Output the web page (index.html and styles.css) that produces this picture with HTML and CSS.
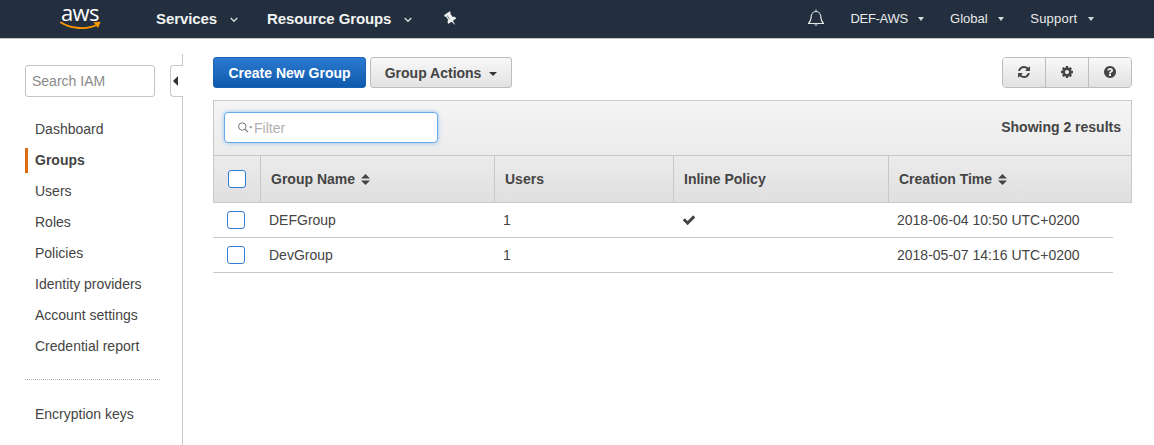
FILE: index.html
```html
<!DOCTYPE html>
<html lang="en">
<head>
    <meta charset="UTF-8">
    <meta name="viewport" content="width=device-width, initial-scale=1.0">
    <title>IAM Groups</title>
    <link rel="stylesheet" href="styles.css">
</head>
<body>
    <header class="topbar">
        <div class="logo">
            <span class="logo-text">aws</span>
            <svg class="logo-smile" viewBox="0 0 42 10" width="42" height="10">
                <path d="M1 1.5C11 8 27 9 38 3.5" fill="none" stroke="#f90" stroke-width="1.8" stroke-linecap="round"/>
                <path d="M33.5 1.2L40.6.8 38 7z" fill="#f90"/>
            </svg>
        </div>
        <a class="nav-main nav-services">Services <svg class="chev" viewBox="0 0 8 6" width="8" height="6"><path d="M.7 1L4 4.300 7.300 1" fill="none" stroke="#d5dbdb" stroke-width="1.400"/></svg></a>
        <a class="nav-main nav-groups">Resource Groups <svg class="chev" viewBox="0 0 8 6" width="8" height="6"><path d="M.7 1L4 4.300 7.300 1" fill="none" stroke="#d5dbdb" stroke-width="1.400"/></svg></a>
        <svg class="pin" viewBox="0 0 1792 1792" width="15" height="15"><path fill="#eef0f0" d="M800 864v-448q0-14-9-23t-23-9-23 9-9 23v448q0 14 9 23t23 9 23-9 9-23zm672 352q0 26-19 45t-45 19h-429l-51 483q-2 12-10.500 20.500t-20.500 8.500h-1q-27 0-32-27l-76-485h-404q-26 0-45-19t-19-45q0-123 78.500-221.500t177.500-98.500v-512q-52 0-90-38t-38-90 38-90 90-38h640q52 0 90 38t38 90-38 90-90 38v512q99 0 177.500 98.500t78.500 221.500z"/></svg>
        <svg class="bell" viewBox="0 0 18 18" width="18" height="18"><path d="M1.500 14.500c1.600-1.600 2.600-2.600 2.600-6 0-3.300 2-6 4.900-6s4.900 2.700 4.900 6c0 3.400 1 4.400 2.600 6z" fill="none" stroke="#e6e9e9" stroke-width="1.200" stroke-linejoin="round"/><path d="M7.200 15.500c.3 1.400 3.300 1.400 3.600 0z" fill="#e6e9e9"/><path d="M9 .5v2" stroke="#e6e9e9" stroke-width="1"/></svg>
        <a class="nav-sub nav-account">DEF-AWS <i class="caret caret-light"></i></a>
        <a class="nav-sub nav-region">Global <i class="caret caret-light"></i></a>
        <a class="nav-sub nav-support">Support <i class="caret caret-light"></i></a>
    </header>

    <div class="page">
        <aside class="sidebar">
            <input class="search" type="text" placeholder="Search IAM">
            <button class="collapse"><i class="collapse-arrow"></i></button>
            <ul class="side-list">
                <li>Dashboard</li>
                <li class="active">Groups</li>
                <li>Users</li>
                <li>Roles</li>
                <li>Policies</li>
                <li>Identity providers</li>
                <li>Account settings</li>
                <li>Credential report</li>
            </ul>
            <div class="side-divider"></div>
            <ul class="side-list side-list-extra">
                <li>Encryption keys</li>
            </ul>
        </aside>

        <main class="content">
            <div class="actions">
                <button class="btn btn-primary">Create New Group</button>
                <button class="btn btn-default">Group Actions <i class="caret caret-dark"></i></button>
                <div class="btn-group">
                    <button class="btn-icon"><svg viewBox="0 0 1792 1792" width="14" height="14"><path d="M1639 1056q0 5-1 7-64 268-268 434.500t-478 166.500q-146 0-282.500-55t-243.500-157l-129 129q-19 19-45 19t-45-19-19-45v-448q0-26 19-45t45-19h448q26 0 45 19t19 45-19 45l-137 137q71 66 161 102t187 36q134 0 250-65t186-179q11-17 53-117 8-23 30-23h192q13 0 22.500 9.500t9.500 22.500zm25-800v448q0 26-19 45t-45 19h-448q-26 0-45-19t-19-45 19-45l138-138q-148-137-349-137-134 0-250 65t-186 179q-11 17-53 117-8 23-30 23h-199q-13 0-22.500-9.500t-9.500-22.500v-7q65-268 270-434.500t480-166.500q146 0 284 55.500t245 156.500l130-129q19-19 45-19t45 19 19 45z"/></svg></button>
                    <button class="btn-icon"><svg viewBox="0 0 1792 1792" width="14" height="14"><path d="M1152 896q0-106-75-181t-181-75-181 75-75 181 75 181 181 75 181-75 75-181zm512-109v222q0 12-8 23t-20 13l-185 28q-19 54-39 91 35 50 107 138 10 12 10 25t-9 23q-27 37-99 108t-94 71q-12 0-26-9l-138-108q-44 23-91 38-16 136-29 186-7 28-36 28h-222q-14 0-24.500-8.500t-11.500-21.500l-28-184q-49-16-90-37l-141 107q-10 9-25 9-14 0-25-11-126-114-165-168-7-10-7-23 0-12 8-23 15-21 51-66.500t54-70.500q-27-50-41-99l-183-27q-13-2-21-12.500t-8-23.500v-222q0-12 8-23t19-13l186-28q14-46 39-92-40-57-107-138-10-12-10-24 0-10 9-23 26-36 98.500-107.500t94.500-71.500q13 0 26 10l138 107q44-23 91-38 16-136 29-186 7-28 36-28h222q14 0 24.500 8.500t11.500 21.500l28 184q49 16 90 37l142-107q9-9 24-9 13 0 25 10 129 119 165 170 7 8 7 22 0 12-8 23-15 21-51 66.500t-54 70.500q26 50 41 98l183 28q13 2 21 12.500t8 23.500z"/></svg></button>
                    <button class="btn-icon"><svg viewBox="0 0 1792 1792" width="14" height="14"><path d="M1024 1376v-192q0-14-9-23t-23-9h-192q-14 0-23 9t-9 23v192q0 14 9 23t23 9h192q14 0 23-9t9-23zm256-672q0-88-55.500-163t-138.500-116-170-41q-243 0-371 213-15 24 8 42l132 100q7 6 19 6 16 0 25-12 53-68 86-92 34-24 86-24 48 0 85.500 26t37.500 59q0 38-20 61t-68 45q-63 28-115.500 86.500t-52.500 125.500v36q0 14 9 23t23 9h192q14 0 23-9t9-23q0-19 21.500-49.500t54.500-49.500q32-18 49-28.500t46-35 44.500-48 28-60.500 12.500-81zm384 192q0 209-103 385.500t-279.500 279.500-385.500 103-385.500-103-279.500-279.500-103-385.500 103-385.500 279.500-279.500 385.500-103 385.500 103 279.500 279.500 103 385.500z"/></svg></button>
                </div>
            </div>

            <div class="toolbar">
                <div class="filter">
                    <svg class="filter-icon" viewBox="0 0 16 12" width="16" height="12"><circle cx="4.300" cy="4.500" r="3.700" fill="none" stroke="#777" stroke-width="1"/><path d="M7 7.200l3 3" stroke="#777" stroke-width="1.200"/><path d="M11 4.500h3.600l-1.800 1.900z" fill="#888"/></svg>
                    <span class="filter-text">Filter</span>
                </div>
                <span class="results">Showing 2 results</span>
            </div>

            <div class="grid-row grid-head">
                <div class="head-cell"><i class="check check-head"></i></div>
                <div class="head-cell">Group Name <svg class="sort" viewBox="0 0 9 11" width="9" height="11"><path d="M4.500 0L9 4.500H0zM4.500 11L0 6.500h9z" fill="#444"/></svg></div>
                <div class="head-cell">Users</div>
                <div class="head-cell">Inline Policy</div>
                <div class="head-cell">Creation Time <svg class="sort" viewBox="0 0 9 11" width="9" height="11"><path d="M4.500 0L9 4.500H0zM4.500 11L0 6.500h9z" fill="#444"/></svg></div>
            </div>

            <div class="grid-row body-row">
                <div class="body-cell"><i class="check"></i></div>
                <div class="body-cell">DEFGroup</div>
                <div class="body-cell">1</div>
                <div class="body-cell"><svg viewBox="0 0 1792 1792" width="14" height="14"><path fill="#444" d="M1671 566q0 40-28 68l-724 724-136 136q-28 28-68 28t-68-28l-136-136-362-362q-28-28-28-68t28-68l136-136q28-28 68-28t68 28l294 295 656-657q28-28 68-28t68 28l136 136q28 28 28 68z"/></svg></div>
                <div class="body-cell">2018-06-04 10:50 UTC+0200</div>
            </div>
            <div class="grid-row body-row">
                <div class="body-cell"><i class="check"></i></div>
                <div class="body-cell">DevGroup</div>
                <div class="body-cell">1</div>
                <div class="body-cell"></div>
                <div class="body-cell">2018-05-07 14:16 UTC+0200</div>
            </div>
        </main>
    </div>
</body>
</html>
```

FILE: styles.css
```css
* {
    box-sizing: border-box;
}

body {
    margin: 0;
    height: 445px;
    overflow: hidden;
    background: #fff;
    color: #444;
    font-family: "Liberation Sans", Arial, sans-serif;
    font-size: 14px;
}

/* top navigation */
.topbar {
    display: flex;
    align-items: center;
    height: 39px;
    padding: 0 0 2px 60px;
    background: #232f3e;
    border-bottom: 1px solid #c4c4c4;
    color: #fff;
}

.logo {
    position: relative;
    width: 42px;
    height: 36px;
}

.logo-text {
    display: block;
    padding-left: 1px;
    font-family: "Open Sans", sans-serif;
    font-size: 22px;
    line-height: 24px;
    letter-spacing: -0.6px;
}

.logo-smile {
    position: absolute;
    left: 0;
    top: 21px;
}

.nav-main {
    font-size: 15px;
    font-weight: bold;
    letter-spacing: -0.1px;
    color: #f2f3f3;
}

.nav-services {
    margin-left: 54px;
}

.nav-groups {
    margin-left: 29px;
}

.chev {
    margin-left: 9px;
    vertical-align: 1px;
}

.pin {
    margin-left: 31px;
    transform: rotate(-35deg);
}

.bell {
    margin-left: 349px;
}

.nav-sub {
    font-size: 13px;
    color: #e8eaea;
}

.nav-account {
    margin-left: 25px;
    letter-spacing: -0.3px;
}

.nav-region {
    margin-left: 26px;
}

.nav-support {
    margin-left: 26px;
    letter-spacing: 0.2px;
}

.caret {
    display: inline-block;
    width: 0;
    height: 0;
    margin-left: 7px;
    border-left: 3.5px solid transparent;
    border-right: 3.5px solid transparent;
    vertical-align: 2px;
}

.caret-light {
    border-top: 4px solid #d5dbdb;
}

.caret-dark {
    margin-left: 4px;
    border-left: 4px solid transparent;
    border-right: 4px solid transparent;
    border-top: 4px solid #333;
}

/* page */
.page {
    display: flex;
}

.sidebar {
    position: relative;
    flex: none;
    width: 183px;
    height: 391px;
    margin-top: 15px;
    padding: 11px 0 0 25px;
    border-right: 1px solid #c8c8c8;
}

.search {
    display: block;
    width: 130px;
    height: 32px;
    padding: 0 6px;
    border: 1px solid #c4c4c4;
    border-radius: 3px;
    font-family: inherit;
    font-size: 14px;
}

.search::placeholder {
    color: #8a8a8a;
    opacity: 1;
}

.collapse {
    position: absolute;
    left: 170px;
    top: 11px;
    width: 13px;
    height: 32px;
    padding: 0;
    background: #fff;
    border: 1px solid #c8c8c8;
    border-right: none;
    border-radius: 4px 0 0 4px;
}

.collapse-arrow {
    display: block;
    width: 0;
    height: 0;
    margin-left: 2px;
    border-top: 5px solid transparent;
    border-bottom: 5px solid transparent;
    border-right: 5px solid #333;
}

.side-list {
    margin: 17px 0 0;
    padding: 0;
    list-style: none;
}

.side-list li {
    height: 31px;
    padding-left: 10px;
    line-height: 31px;
    color: #444;
}

.side-list .active {
    position: relative;
    font-weight: bold;
}

.side-list .active::before {
    content: "";
    position: absolute;
    left: 0;
    top: 3px;
    width: 3px;
    height: 25px;
    background: #dd6b10;
}

.side-divider {
    width: 135px;
    margin-top: 17px;
    border-top: 1px dotted #b5b5b5;
}

.side-list-extra {
    margin-top: 19px;
}

/* main area */
.content {
    flex: 1;
    padding: 18px 22px 0 30px;
}

.actions {
    display: flex;
    align-items: center;
    height: 31px;
    margin-bottom: 12px;
}

.btn {
    height: 31px;
    padding: 0;
    border-radius: 3px;
    font-family: inherit;
    font-size: 14px;
    font-weight: bold;
}

.btn-primary {
    width: 153px;
    background: linear-gradient(#2b7ad0, #0f5aad);
    border: 1px solid #1a62b3;
    color: #fff;
}

.btn-default {
    width: 142px;
    margin-left: 4px;
    background: linear-gradient(#f8f8f8, #e2e2e2);
    border: 1px solid #bdbdbd;
    color: #444;
}

.btn-group {
    display: flex;
    margin-left: auto;
    width: 130px;
    height: 31px;
    border: 1px solid #bdbdbd;
    border-radius: 4px;
    overflow: hidden;
}

.btn-icon {
    flex: 1;
    padding: 2px 0 0;
    background: linear-gradient(#f8f8f8, #e2e2e2);
    border: none;
    border-left: 1px solid #bdbdbd;
}

.btn-icon:first-child {
    border-left: none;
}

.btn-icon svg {
    fill: #444;
}

.toolbar {
    display: flex;
    align-items: center;
    justify-content: space-between;
    height: 55px;
    padding: 0 10px 1px 10px;
    background: linear-gradient(#f5f5f5, #ebebeb);
    border: 1px solid #c8c8c8;
    border-bottom: none;
}

.filter {
    display: flex;
    align-items: center;
    width: 214px;
    height: 31px;
    padding-left: 13px;
    background: #fff;
    border: 1px solid #66aaec;
    border-radius: 4px;
    box-shadow: 0 0 4px rgba(82, 160, 236, 0.6);
}

.filter-text {
    color: #b0b0b0;
}

.results {
    margin-bottom: 2px;
    font-weight: bold;
}

.grid-row {
    display: grid;
    grid-template-columns: 47px 234px 179px 215px 1fr;
}

.grid-head {
    grid-template-columns: 46px 234px 179px 215px 1fr;
    height: 48px;
    background: linear-gradient(#ececec, #dfdfdf);
    border: 1px solid #c8c8c8;
}

.head-cell {
    display: flex;
    align-items: center;
    padding-left: 10px;
    border-left: 1px solid #c8c8c8;
    font-weight: bold;
}

.head-cell:first-child {
    padding-left: 14px;
    border-left: none;
}

.sort {
    margin-left: 6px;
}

.body-row {
    width: 900px;
    height: 35px;
    border-bottom: 1px solid #c8c8c8;
}

.body-cell {
    display: flex;
    align-items: center;
    padding-left: 9px;
    color: #444;
}

.body-cell:first-child {
    padding-left: 14px;
}

.check {
    display: block;
    width: 18px;
    height: 18px;
    background: #fff;
    border: 1px solid #2f7fd3;
    border-radius: 3px;
}
```
